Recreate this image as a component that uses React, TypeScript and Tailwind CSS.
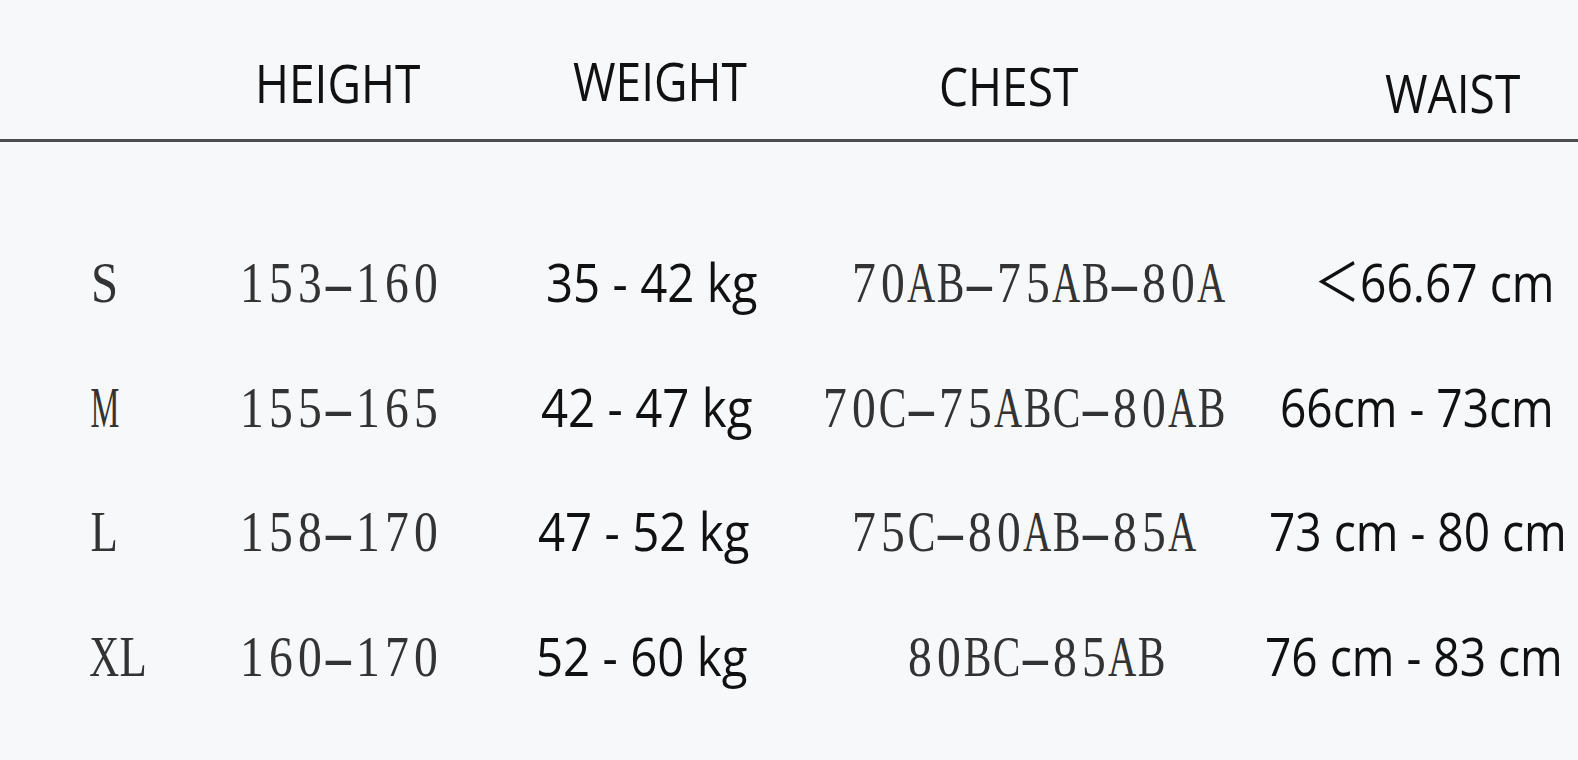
import type { ReactNode } from 'react';

type SizeRow = {
  size: string;
  height: string;
  weight: string;
  chest: string;
  waist: string;
  weightPad: string;
  chestPad: string;
  waistPad: string;
};

const rows: SizeRow[] = [
  {
    size: 'S',
    height: '153-160',
    weight: '35 - 42 kg',
    chest: '70AB-75AB-80A',
    waist: '＜66.67 cm',
    weightPad: 'pl-[18px]',
    chestPad: 'pl-[49px]',
    waistPad: 'pl-[74px]',
  },
  {
    size: 'M',
    height: '155-165',
    weight: '42 - 47 kg',
    chest: '70C-75ABC-80AB',
    waist: '66cm - 73cm',
    weightPad: 'pl-[13px]',
    chestPad: 'pl-[20px]',
    waistPad: 'pl-[40px]',
  },
  {
    size: 'L',
    height: '158-170',
    weight: '47 - 52 kg',
    chest: '75C-80AB-85A',
    waist: '73 cm - 80 cm',
    weightPad: 'pl-[10px]',
    chestPad: 'pl-[49px]',
    waistPad: 'pl-[29px]',
  },
  {
    size: 'XL',
    height: '160-170',
    weight: '52 - 60 kg',
    chest: '80BC-85AB',
    waist: '76 cm - 83 cm',
    weightPad: 'pl-[8px]',
    chestPad: 'pl-[105px]',
    waistPad: 'pl-[25px]',
  },
];

const sans = "font-['Open_Sans','Noto_Sans_CJK_SC',sans-serif]";

// Times glyphs are wider than the chart's monospaced serif, squeeze them per glyph
const glyphScale: Record<string, string> = {
  '-': 'scale-x-[1.75]',
  A: 'scale-x-[0.7]',
  B: 'scale-x-[0.74]',
  C: 'scale-x-[0.74]',
  M: 'scale-x-[0.58]',
  X: 'scale-x-[0.74]',
  L: 'scale-x-[0.8]',
  S: 'scale-x-[0.87]',
};

function MonoSerif({ text }: { text: string }) {
  return (
    <span className="font-['Liberation_Serif','DejaVu_Serif',serif] text-[56px] leading-none text-[#333]">
      {text.split('').map((ch, i) => (
        <span key={i} className="inline-flex w-[29px] justify-center">
          <span className={`inline-block ${glyphScale[ch] ?? 'scale-x-[0.85]'}`}>{ch}</span>
        </span>
      ))}
    </span>
  );
}

function SansText({ children, wide = false }: { children: ReactNode; wide?: boolean }) {
  return (
    <span
      className={`${sans} inline-block origin-left whitespace-nowrap text-[53px] leading-none text-[#111] ${
        wide ? 'scale-x-[0.895]' : 'scale-x-[0.87]'
      }`}
    >
      {children}
    </span>
  );
}

function HeaderLabel({ children, className }: { children: ReactNode; className: string }) {
  return (
    <div className={className}>
      <SansText>{children}</SansText>
    </div>
  );
}

export default function App() {
  return (
    <div className="h-[760px] w-full overflow-hidden bg-[#f7f8fa]">
      <div className="flex h-[139px] items-start">
        <div className="w-[237px] shrink-0" />
        <HeaderLabel className="w-[291px] shrink-0 pl-[18px] pt-[56px]">HEIGHT</HeaderLabel>
        <HeaderLabel className="w-[272px] shrink-0 pl-[45px] pt-[54px]">WEIGHT</HeaderLabel>
        <HeaderLabel className="w-[440px] shrink-0 pl-[139px] pt-[59px]">CHEST</HeaderLabel>
        <HeaderLabel className="min-w-0 flex-1 pl-[145px] pt-[66px]">WAIST</HeaderLabel>
      </div>
      <div className="h-[3px] bg-[#4d4d4d]" />

      <div className="flex flex-col pt-[113px]">
        {rows.map((row) => (
          <div key={row.size} className="flex h-[124.5px] items-baseline">
            <div className="w-[237px] shrink-0 pl-[90px]">
              <MonoSerif text={row.size} />
            </div>
            <div className="w-[291px] shrink-0">
              <MonoSerif text={row.height} />
            </div>
            <div className={`w-[272px] shrink-0 ${row.weightPad}`}>
              <SansText wide>{row.weight}</SansText>
            </div>
            <div className={`w-[440px] shrink-0 ${row.chestPad}`}>
              <MonoSerif text={row.chest} />
            </div>
            <div className={`min-w-0 flex-1 ${row.waistPad}`}>
              <SansText>{row.waist}</SansText>
            </div>
          </div>
        ))}
      </div>
    </div>
  );
}
